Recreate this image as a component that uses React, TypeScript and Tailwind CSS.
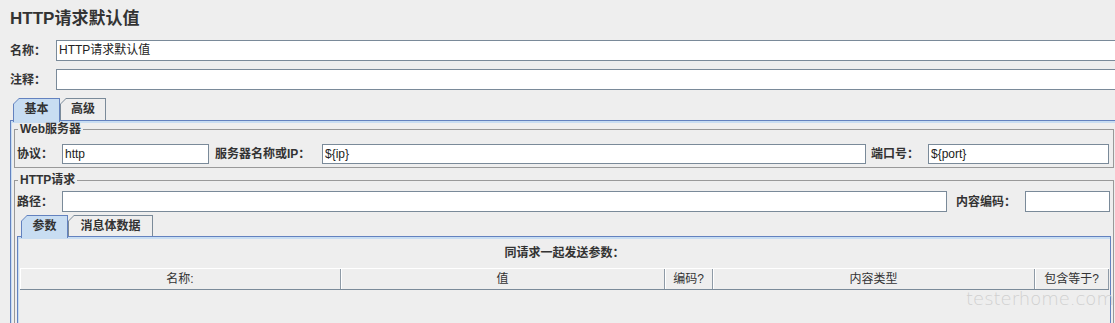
import React from 'react';

// JMeter "HTTP Request Defaults" panel, Metal/Ocean look

const font = "font-['Liberation_Sans','Noto_Sans_CJK_SC',sans-serif]";

function Field({ value = '', w, h = 20 }: { value?: string; w: string; h?: number }) {
  return (
    <div
      className={`${w} ${h === 21 ? 'h-[21px]' : 'h-[20px]'} shrink-0 border border-[#7a8a99] bg-white pl-[2px] text-[12px] leading-[18px] text-[#222] overflow-hidden whitespace-nowrap`}
    >
      {value}
    </div>
  );
}

function Label({ text, w }: { text: string; w: string }) {
  return <div className={`${w} shrink-0 text-[12px] font-bold leading-[14px] text-[#333] whitespace-nowrap`}>{text}</div>;
}

function Tab({ label, active, w, h }: { label: string; active?: boolean; w: string; h: string }) {
  return (
    <div
      className={`${w} ${h} shrink-0 pt-px px-px [clip-path:polygon(6px_0,100%_0,100%_100%,0_100%,0_6px)] ${
        active ? 'bg-[#6382bf] relative z-10 -mb-[2px]' : 'bg-[#7a8a99]'
      }`}
    >
      <div
        className={`h-full flex items-start justify-center pt-[3px] text-[12px] font-bold leading-[14px] text-[#333] [clip-path:polygon(5px_0,100%_0,100%_100%,0_100%,0_5px)] ${
          active ? 'bg-[#c8ddf2]' : 'bg-[#eeeeee]'
        }`}
      >
        {label}
      </div>
    </div>
  );
}

function GroupBox({ title, children, className = '' }: { title: string; children: React.ReactNode; className?: string }) {
  return (
    <fieldset className={`w-[1100px] border border-[#999999] px-[2px] ${className}`}>
      <legend className="ml-[1px] px-[2px] text-[12px] font-bold leading-[14px] text-[#333]">{title}</legend>
      {children}
    </fieldset>
  );
}

const columns = [
  { label: '名称:', w: 'w-[321px]' },
  { label: '值', w: 'w-[324px]' },
  { label: '编码?', w: 'w-[48px]' },
  { label: '内容类型', w: 'w-[322px]' },
  { label: '包含等于?', w: 'w-[72px]' },
];

export default function App() {
  return (
    <div className={`relative w-[1115px] h-[323px] overflow-hidden bg-[#eeeeee] pl-[10px] pt-[9px] ${font}`}>
      {/* Title */}
      <div className="h-[20px] text-[17px] font-bold leading-[20px] text-[#333]">HTTP请求默认值</div>

      {/* Name / comment */}
      <div className="mt-[11px] flex items-center">
        <Label text="名称：" w="w-[46px]" />
        <Field value="HTTP请求默认值" w="w-[1065px]" h={21} />
      </div>
      <div className="mt-[8px] flex items-center">
        <Label text="注释：" w="w-[46px]" />
        <Field w="w-[1065px]" h={21} />
      </div>

      {/* Outer tabs */}
      <div className="mt-[8px] ml-[3px] flex items-end h-[22px]">
        <Tab label="基本" active w="w-[47px]" h="h-[24px]" />
        <Tab label="高级" w="w-[46px]" h="h-[22px]" />
      </div>

      <div className="border-t border-l border-[#6382bf] shadow-[inset_1px_2px_0_#c8ddf2] pl-[3px] pt-[1px] h-[220px]">
        <GroupBox title="Web服务器" className="pb-[3px]">
          <div className="pt-[8px] flex items-center h-[28px]">
            <Label text="协议：" w="w-[45px]" />
            <Field value="http" w="w-[147px]" />
            <div className="w-[6px]" />
            <Label text="服务器名称或IP：" w="w-[107px]" />
            <Field value="${ip}" w="w-[544px]" />
            <div className="w-[5px]" />
            <Label text="端口号：" w="w-[57px]" />
            <Field value="${port}" w="w-[181px]" />
          </div>
        </GroupBox>

        <GroupBox title="HTTP请求" className="mt-[5px] h-[200px]">
          <div className="pt-[4px] flex items-center">
            <Label text="路径：" w="w-[45px]" />
            <Field w="w-[885px]" h={21} />
            <div className="w-[9px]" />
            <Label text="内容编码：" w="w-[69px]" />
            <Field w="w-[85px]" h={21} />
          </div>

          {/* Inner tabs */}
          <div className="mt-[3px] ml-[4px] flex items-end h-[21px]">
            <Tab label="参数" active w="w-[47px]" h="h-[23px]" />
            <Tab label="消息体数据" w="w-[85px]" h="h-[21px]" />
          </div>
          <div className="border-t border-l border-r border-[#6382bf] shadow-[inset_1px_2px_0_#c8ddf2] pl-[2px] pr-[1px] pt-[9px] h-[120px]">
            <div className="text-center text-[12px] font-bold leading-[14px] text-[#333]">同请求一起发送参数：</div>
            <div className="mt-[8px] flex h-[22px] border-t border-white border-b border-b-[#7a8a99]">
              {columns.map((c, i) => (
                <div
                  key={c.label}
                  className={`${c.w} ${i === columns.length - 1 ? 'flex-1' : 'shrink-0'} flex items-center justify-center border-r border-r-[#8e9aa6] shadow-[inset_1px_0_0_#ffffff] text-[12px] leading-[14px] text-[#333] whitespace-nowrap`}
                >
                  {c.label}
                </div>
              ))}
            </div>
          </div>
        </GroupBox>
      </div>

      {/* watermark */}
      <div className="absolute left-[966px] top-[290px] text-[18px] leading-none font-['DejaVu_Sans',sans-serif] font-extralight text-[#d0d0d0] pointer-events-none">
        testerhome.com
      </div>
    </div>
  );
}
